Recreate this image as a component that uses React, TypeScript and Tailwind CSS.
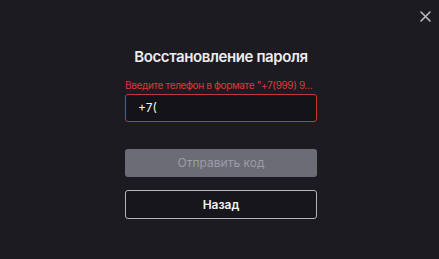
import React from "react";

export default function App() {
  return (
    <div
      className="relative w-[439px] h-[259px] bg-[#1c1b21] overflow-hidden"
      style={{ fontFamily: "Inter, 'Noto Sans', sans-serif" }}
    >
      <button className="absolute left-[420px] top-[11px] w-[11px] h-[11px] text-[#b9b9bf]">
        <svg viewBox="0 0 11 11" width="11" height="11" fill="none" stroke="currentColor" strokeWidth="1.6" strokeLinecap="round">
          <path d="M1 1L10 10M10 1L1 10" />
        </svg>
      </button>
      <div className="ml-[125px] w-[192px] pt-[47px] flex flex-col">
        <h1 className="text-center text-[15px] leading-[20px] font-semibold text-[#ececf0] tracking-[-0.4px]">
          Восстановление пароля
        </h1>
        <div className="mt-[12px] text-[10px] leading-[13px] text-[#e0343a] whitespace-nowrap tracking-[-0.35px]">
          Введите телефон в формате "+7(999) 9...
        </div>
        <div className="mt-[2px] h-[28px] rounded-[3px] border border-[#c8343a] bg-[#141318] flex items-center pl-[12px] text-[12px] text-[#f2f2f5]">
          +7(
        </div>
        <button className="mt-[27px] h-[28px] rounded-[3px] bg-[#6c6c76] text-[12px] text-[#9c9ca6]">
          Отправить код
        </button>
        <button className="mt-[13px] h-[29px] rounded-[3px] border border-[#b4b4ba] bg-[#17161b] text-[12px] font-semibold text-[#f2f2f5]">
          Назад
        </button>
      </div>
    </div>
  );
}
